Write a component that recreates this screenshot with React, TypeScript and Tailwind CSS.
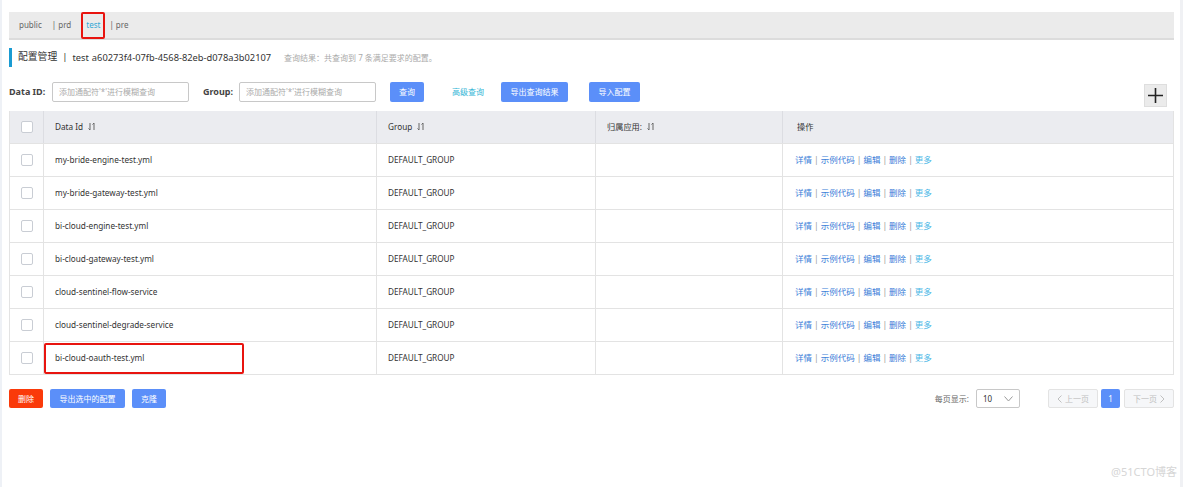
import React from "react";

const rows = [
  "my-bride-engine-test.yml",
  "my-bride-gateway-test.yml",
  "bi-cloud-engine-test.yml",
  "bi-cloud-gateway-test.yml",
  "cloud-sentinel-flow-service",
  "cloud-sentinel-degrade-service",
  "bi-cloud-oauth-test.yml",
];

const font = { fontFamily: '"Noto Sans", "Noto Sans CJK SC", sans-serif' };

function Sort() {
  return (
    <svg width="8" height="9" viewBox="0 0 8 9" className="inline-block ml-[5px] -mt-[2px]">
      <path d="M2 1v7M0.5 6.5L2 8" stroke="#666" strokeWidth="1" fill="none" />
      <path d="M6 8V1M4.5 2.5L6 1" stroke="#666" strokeWidth="1" fill="none" />
    </svg>
  );
}

function Box() {
  return <div className="w-[12px] h-[12px] rounded-[2px] border border-[#c9cdd4] bg-white" />;
}

export default function App() {
  return (
    <div className="relative w-[1184px] h-[487px] bg-white overflow-hidden text-[#333]" style={font}>
      <div className="absolute left-0 top-0 w-[2px] h-full bg-[#eef1f6]" />
      <div className="absolute right-[1px] top-0 w-[3px] h-full bg-[#f0f1f4]" />
      <div className="pl-[9px] pr-[10px] pt-[12px]">
        {/* namespace bar */}
        <div className="h-[28px] bg-[#ebebeb] border-b-2 border-[#dcdcdc] flex items-center text-[8px] text-[#666] pl-[10px]">
          <span>public</span>
          <span className="ml-[10px]">| prd</span>
          <span className="ml-[10px] relative text-[#33a8d6] border-2 border-[#e8140f] rounded-[2px] px-[3px] h-[27px] flex items-center">test</span>
          <span className="ml-[4px]">| pre</span>
        </div>
        {/* title */}
        <div className="mt-[8px] h-[19px] flex items-center border-l-[3px] border-[#1a9bd2] pl-[6px]">
          <span className="text-[9.8px] text-[#333]">配置管理</span>
          <span className="text-[9.5px] text-[#333] ml-[5px]">|</span>
          <span className="text-[9.3px] text-[#333] ml-[5px]">test</span>
          <span className="text-[9.3px] text-[#333] ml-[3px]">a60273f4-07fb-4568-82eb-d078a3b02107</span>
          <span className="text-[8px] text-[#aaa] ml-[13px]">查询结果：共查询到 7 条满足要求的配置。</span>
        </div>
        {/* search row */}
        <div className="mt-[15px] flex items-center h-[20px]">
          <span className="text-[9px] font-bold text-[#444] w-[43px]">Data ID:</span>
          <div className="w-[137px] h-[20px] border border-[#c8c8c8] rounded-[2px] flex items-center pl-[6px] text-[8px] text-[#aaa]">添加通配符'*'进行模糊查询</div>
          <span className="text-[9px] font-bold text-[#444] ml-[14px] w-[36px]">Group:</span>
          <div className="w-[137px] h-[20px] border border-[#c8c8c8] rounded-[2px] flex items-center pl-[6px] text-[8px] text-[#aaa]">添加通配符'*'进行模糊查询</div>
          <div className="ml-[14px] w-[34px] h-[20px] bg-[#5b8ff9] rounded-[2px] text-white text-[8px] flex items-center justify-center">查询</div>
          <span className="ml-[28px] text-[8px] text-[#33b5d6]">高级查询</span>
          <div className="ml-[17px] w-[67px] h-[20px] bg-[#5b8ff9] rounded-[2px] text-white text-[8px] flex items-center justify-center">导出查询结果</div>
          <div className="ml-[21px] w-[51px] h-[20px] bg-[#5b8ff9] rounded-[2px] text-white text-[8px] flex items-center justify-center">导入配置</div>
          <div className="ml-auto mt-[7px] mr-[7px] w-[23px] h-[23px] bg-[#ebebeb] border border-[#dedede] flex items-center justify-center">
            <svg width="15" height="15" viewBox="0 0 15 15"><path d="M7.5 0v15M0 7.5h15" stroke="#222" strokeWidth="1.6" /></svg>
          </div>
        </div>
        {/* table */}
        <div className="mt-[9px] border-r border-[#e3e3e3] border-l border-[#e3e3e3]">
          <div className="flex h-[33px] bg-[#ebecf0] text-[8.2px] text-[#333] border-b border-[#e3e3e3]">
            <div className="w-[34px] flex items-center justify-center border-r border-[#dcdde2]"><Box /></div>
            <div className="w-[333px] flex items-center pl-[11px] border-r border-[#dcdde2]">Data Id<Sort /></div>
            <div className="w-[219px] flex items-center pl-[11px] border-r border-[#dcdde2]">Group<Sort /></div>
            <div className="w-[187px] flex items-center pl-[11px] border-r border-[#dcdde2]">归属应用:<Sort /></div>
            <div className="flex-1 flex items-center pl-[14px]">操作</div>
          </div>
          {rows.map((r, i) => (
            <div key={r} className="flex h-[33px] text-[8.2px] text-[#333] border-b border-[#e3e3e3]">
              <div className="w-[34px] flex items-center justify-center border-r border-[#e3e3e3]"><Box /></div>
              <div className="w-[333px] flex items-center pl-[11px] border-r border-[#e3e3e3] relative">
                {i === 6 && <div className="absolute left-[0px] top-[1px] w-[200px] h-[31px] border-2 border-[#e8140f] rounded-[2px]" />}
                {r}
              </div>
              <div className="w-[219px] flex items-center pl-[11px] border-r border-[#e3e3e3]">DEFAULT_GROUP</div>
              <div className="w-[187px] flex items-center pl-[11px] border-r border-[#e3e3e3]"></div>
              <div className="flex-1 flex items-center pl-[12px] text-[8.5px] text-[#3b7dd8]">
                <span>详情</span>
                <span className="mx-[2px] text-[#999]">|</span>
                <span>示例代码</span>
                <span className="mx-[2px] text-[#999]">|</span>
                <span>编辑</span>
                <span className="mx-[2px] text-[#999]">|</span>
                <span>删除</span>
                <span className="mx-[2px] text-[#999]">|</span>
                <span className="text-[#4bb8e6]">更多</span>
              </div>
            </div>
          ))}
        </div>
        {/* bottom */}
        <div className="mt-[14px] flex items-center h-[19px]">
          <div className="w-[34px] h-[19px] bg-[#fa3a0a] rounded-[2px] text-white text-[8px] flex items-center justify-center">删除</div>
          <div className="ml-[7px] w-[75px] h-[19px] bg-[#5b8ff9] rounded-[2px] text-white text-[8px] flex items-center justify-center">导出选中的配置</div>
          <div className="ml-[7px] w-[34px] h-[19px] bg-[#5b8ff9] rounded-[2px] text-white text-[8px] flex items-center justify-center">克隆</div>
          <div className="ml-auto flex items-center">
            <span className="text-[8px] text-[#666]">每页显示:</span>
            <div className="ml-[7px] w-[44px] h-[19px] border border-[#c8c8c8] rounded-[2px] flex items-center justify-between px-[6px] text-[8px] text-[#333]">
              <span>10</span>
              <svg width="9" height="6" viewBox="0 0 9 6"><path d="M0.5 0.5L4.5 5L8.5 0.5" stroke="#999" fill="none" strokeWidth="1" /></svg>
            </div>
            <div className="ml-[28px] w-[50px] h-[19px] border border-[#e3e3e3] bg-[#f6f7f9] rounded-[2px] flex items-center justify-center text-[8px] text-[#c0c0c0]">
              <svg width="5" height="8" viewBox="0 0 5 8" className="mr-[3px]"><path d="M4.5 0.5L1 4L4.5 7.5" stroke="#c0c0c0" fill="none" /></svg>上一页
            </div>
            <div className="ml-[3px] w-[19px] h-[19px] bg-[#5b8ff9] rounded-[2px] flex items-center justify-center text-[8px] text-white">1</div>
            <div className="ml-[4px] w-[50px] h-[19px] border border-[#e3e3e3] bg-[#f6f7f9] rounded-[2px] flex items-center justify-center text-[8px] text-[#c0c0c0]">
              下一页<svg width="5" height="8" viewBox="0 0 5 8" className="ml-[3px]"><path d="M0.5 0.5L4 4L0.5 7.5" stroke="#c0c0c0" fill="none" /></svg>
            </div>
          </div>
        </div>
      </div>
      <div className="absolute right-[7px] top-[464px] text-[11px] text-[#d6d6d6]">@51CTO博客</div>
    </div>
  );
}
